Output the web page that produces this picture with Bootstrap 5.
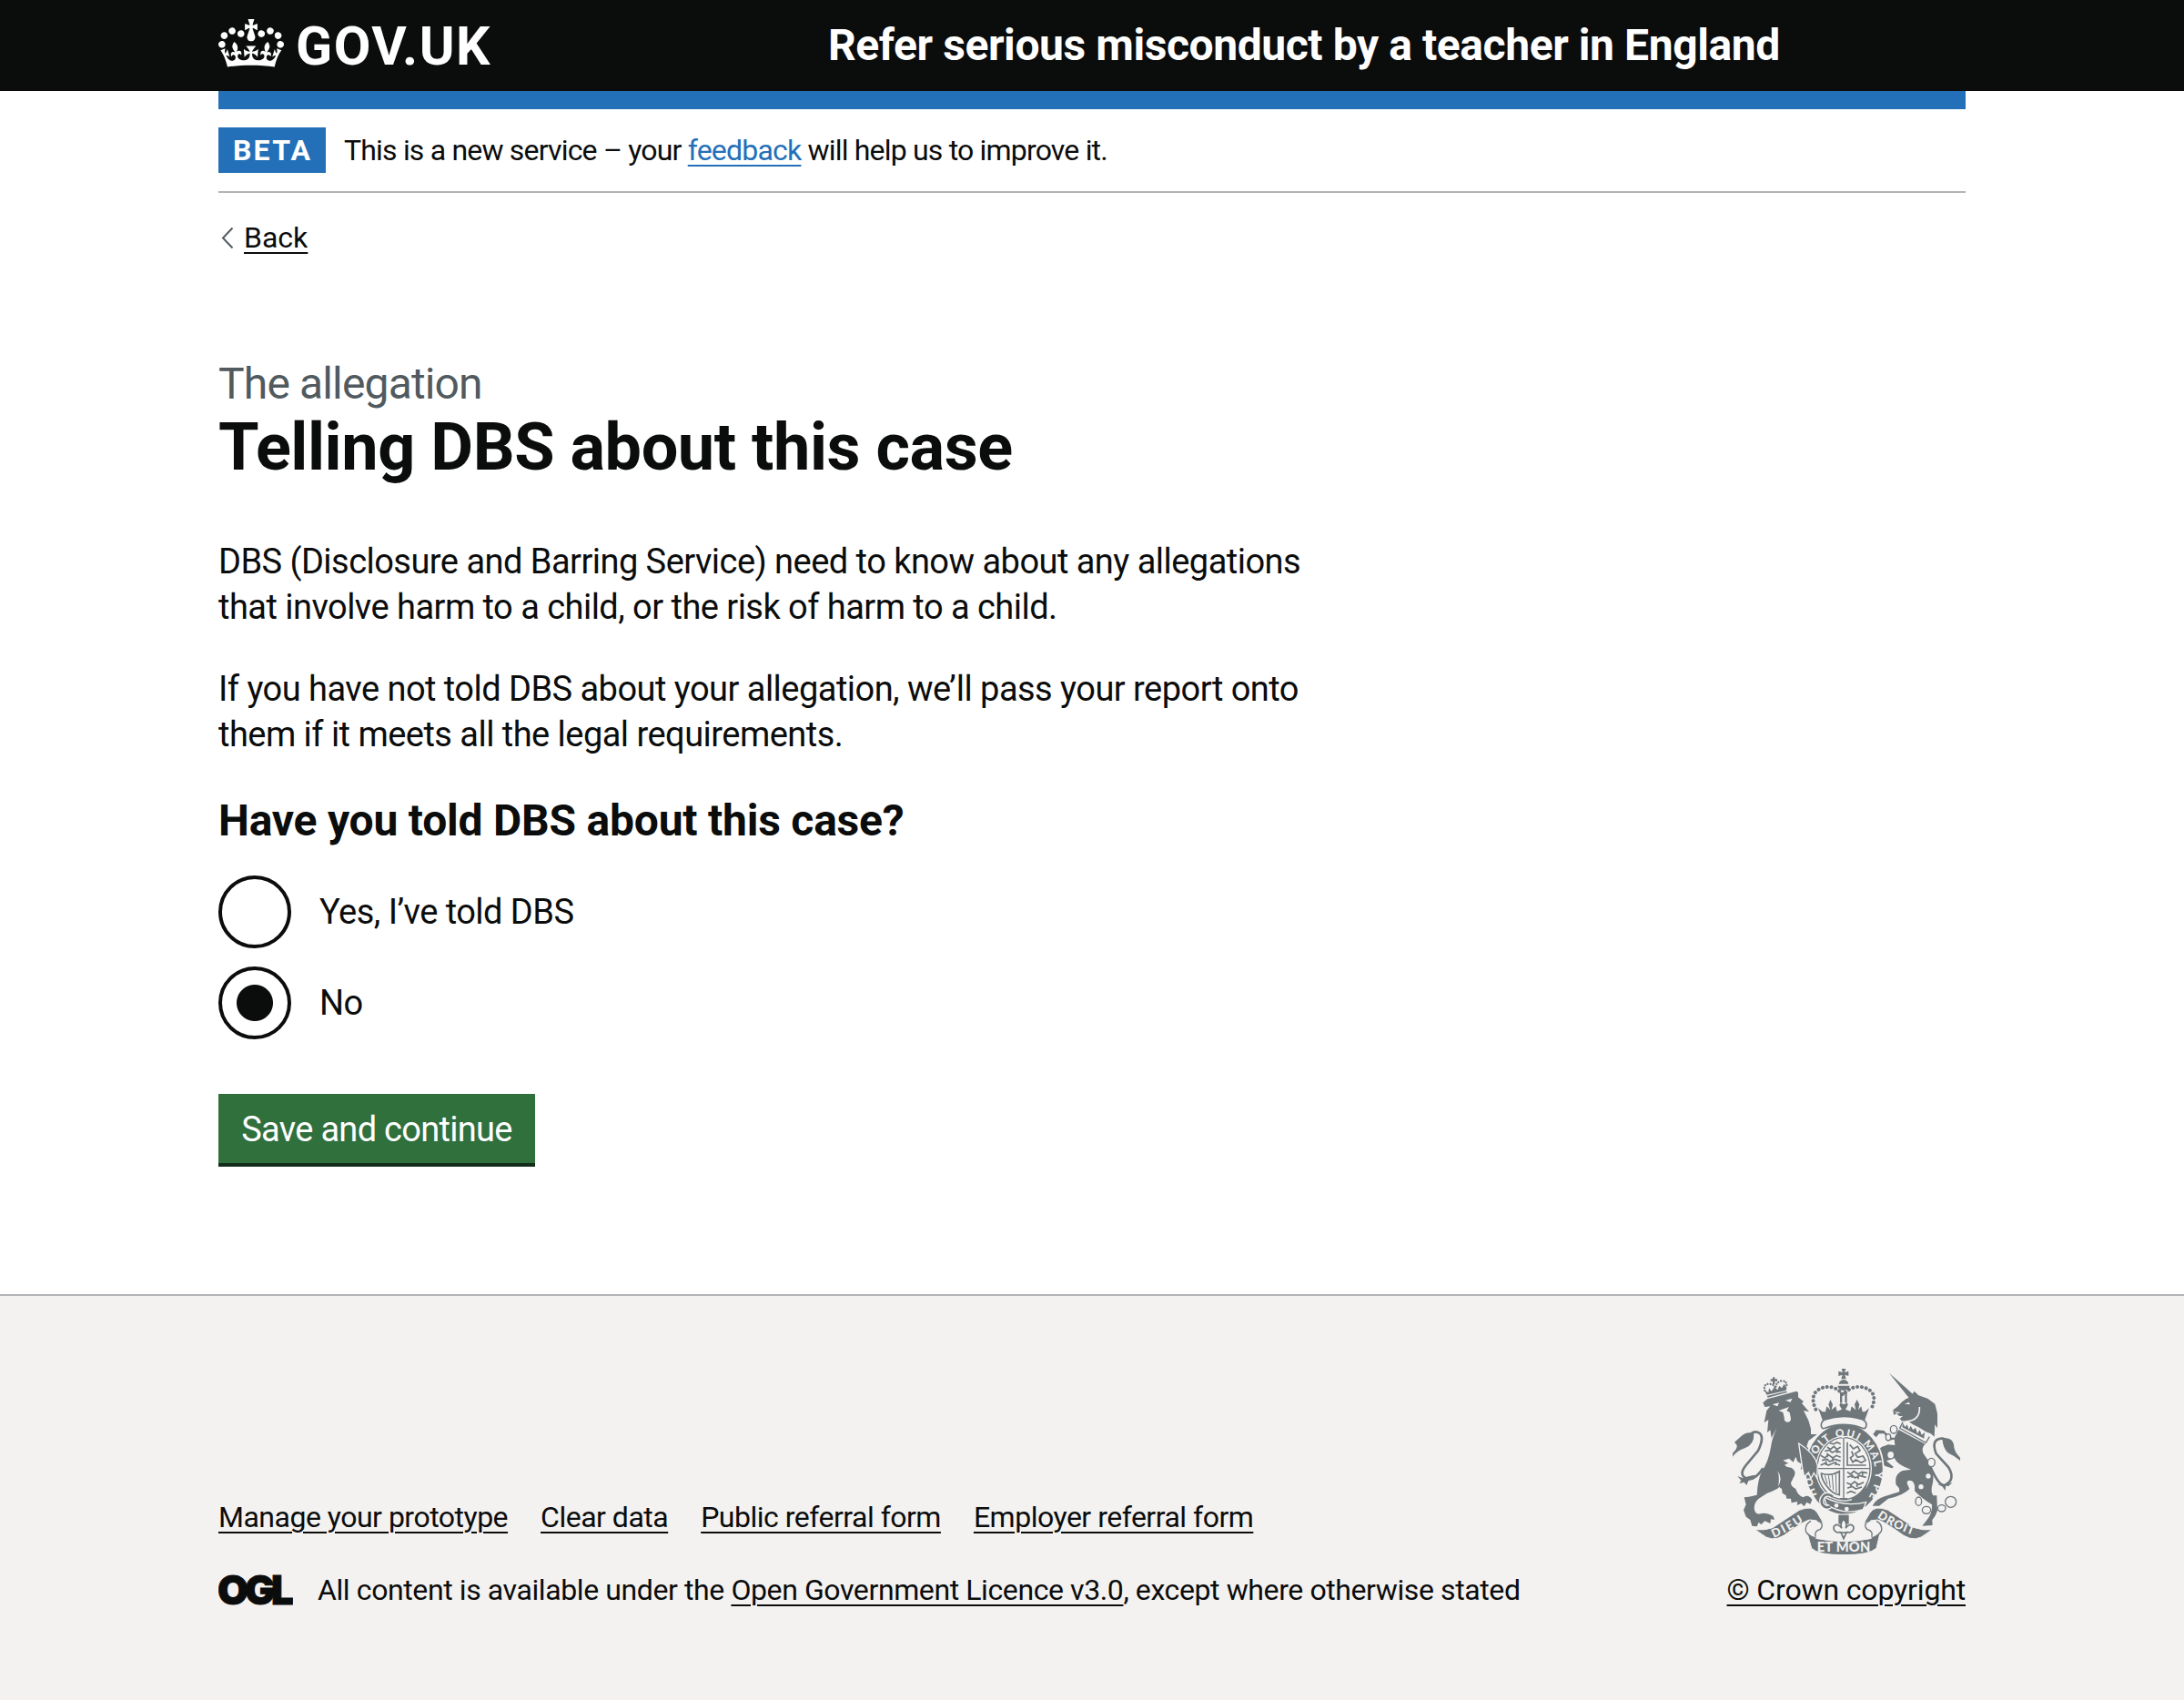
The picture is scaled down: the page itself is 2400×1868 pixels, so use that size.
<!DOCTYPE html>
<html lang="en">
<head>
<meta charset="utf-8">
<meta name="viewport" content="width=device-width, initial-scale=1">
<title>Telling DBS about this case – Refer serious misconduct by a teacher in England</title>
<link rel="stylesheet" href="https://cdn.jsdelivr.net/npm/bootstrap@5.3.0/dist/css/bootstrap.min.css">
<style>
  :root { --ink:#0b0c0c; --brand:#2370b8; --line:#b1b4b6; --muted:#505a5f; --footer:#f3f2f1; --go:#2f703d; --go-dark:#122d1a; --arms:#6f777b; }
  body { font-family: Roboto, "Liberation Sans", sans-serif; color: var(--ink); font-size: 38px; line-height: 50px; letter-spacing: -.53px; }
  .page-width { width: 1920px; }
  .site-header { background: var(--ink); height: 100px; }
  .site-logo { width: 670px; gap: 13px; color: #fff; font-size: 59px; letter-spacing: 1.5px; line-height: 1; }
  .site-logo svg { margin-top: -5px; }
  .service-name { color: #fff; font-size: 48px; line-height: 60px; letter-spacing: -.42px; }
  .brand-bar { height: 20px; background: var(--brand); }
  .phase { padding: 20px 0; border-bottom: 2px solid var(--line); gap: 20px; font-size: 32px; line-height: 50px; letter-spacing: -.81px; }
  .phase-tag { background: var(--brand); padding: 0 14px 0 16px; height: 50px; width: 118px; letter-spacing: 2.2px; border-radius: 0; font-size: 32px; line-height: 50px; }
  .ul-link { color: var(--ink); text-decoration: underline; text-decoration-thickness: 2px; text-underline-offset: 5px; }
  .ul-link.brand { color: var(--brand); }
  .back-row { margin-top: 29px; font-size: 32px; line-height: 40px; letter-spacing: 0; padding-left: 3px; gap: 11px; }
  .content { padding-top: 111px; height: 1141px; }
  .caption-text { font-size: 48px; line-height: 60px; color: var(--muted); letter-spacing: -.85px; margin-bottom: 2px; }
  h1 { font-size: 72px; line-height: 75px; letter-spacing: -.44px; margin-bottom: 63px; }
  .copy { width: 1280px; margin-bottom: 40px; }
  h2 { font-size: 48px; line-height: 60px; letter-spacing: -.22px; margin-bottom: 30px; }
  .choice { height: 80px; margin-bottom: 20px; gap: 31px; padding: 0; min-height: 0; }
  .choice .form-check-input { width: 80px; height: 80px; margin: 0; border: 4px solid var(--ink); background-color: transparent; float: none; flex: none; }
  .choice .form-check-input:checked { background-image: radial-gradient(circle, var(--ink) 19.5px, transparent 20.5px); background-size: 100% 100%; background-color: transparent; border-color: var(--ink); }
  .go-btn { margin-top: 40px; width: 348px; height: 76px; padding: 2px 0 0; border: 0; border-radius: 0; background: var(--go); color: #fff; font-size: 38px; line-height: 50px; letter-spacing: -.7px; box-shadow: 0 4px 0 var(--go-dark); }
  .site-footer { background: var(--footer); border-top: 2px solid var(--line); height: 446px; padding-top: 80px; font-size: 32px; line-height: 40px; letter-spacing: -.45px; }
  .foot-main { height: 263px; }
  .foot-nav { gap: 36px; margin-bottom: 40px; }
  .foot-nav, .crown-copy { letter-spacing: -.5px; }
  .licence { gap: 27px; letter-spacing: -.4px; }
  .crown-copy { letter-spacing: -.15px; }
  .arms { margin: 0 6px 19px 0; }
</style>
<script src="https://cdn.jsdelivr.net/npm/bootstrap@5.3.0/dist/js/bootstrap.bundle.min.js"></script>
</head>
<body class="bg-white">
<header class="site-header">
  <div class="page-width mx-auto h-100 d-flex align-items-center">
    <a class="site-logo d-flex align-items-center text-decoration-none fw-bold" href="#">
      <svg width="72" height="53" viewBox="0 0 132 97" fill="currentColor" aria-hidden="true"><path fill-rule="evenodd" d="M25 30.2c3.5 1.5 7.7-.2 9.1-3.7 1.5-3.6-.2-7.8-3.9-9.2-3.6-1.4-7.6.3-9.1 3.9-1.4 3.5.3 7.5 3.9 9zM9 39.5c3.6 1.5 7.8-.2 9.2-3.7 1.5-3.6-.2-7.8-3.9-9.1-3.6-1.5-7.6.2-9.1 3.8-1.4 3.5.3 7.5 3.8 9zM4.4 57.2c3.5 1.5 7.7-.2 9.1-3.8 1.5-3.6-.2-7.7-3.9-9.1-3.5-1.5-7.6.3-9.1 3.8-1.4 3.5.3 7.6 3.9 9.1zm38.3-21.4c3.5 1.5 7.7-.2 9.1-3.8 1.5-3.6-.2-7.7-3.9-9.1-3.6-1.5-7.6.3-9.1 3.8-1.3 3.6.4 7.7 3.9 9.1zm64.4-5.6c-3.6 1.5-7.8-.2-9.1-3.7-1.5-3.6.2-7.8 3.8-9.2 3.6-1.4 7.7.3 9.2 3.9 1.3 3.5-.4 7.5-3.9 9zm15.9 9.3c-3.6 1.5-7.7-.2-9.1-3.7-1.5-3.6.2-7.8 3.7-9.1 3.6-1.5 7.7.2 9.2 3.8 1.5 3.5-.3 7.5-3.8 9zm4.7 17.7c-3.6 1.5-7.8-.2-9.2-3.8-1.5-3.6.2-7.7 3.9-9.1 3.6-1.5 7.7.3 9.2 3.8 1.3 3.5-.4 7.6-3.9 9.1zM89.3 35.8c-3.6 1.5-7.8-.2-9.2-3.8-1.4-3.6.2-7.7 3.9-9.1 3.6-1.5 7.7.3 9.2 3.8 1.4 3.6-.3 7.7-3.9 9.1zM69.7 17.7l8.9 4.7V9.3l-8.9 2.8c-.2-.3-.5-.6-.9-.9L72.4 0H59.6l3.5 11.2c-.3.3-.6.5-.9.9l-8.8-2.8v13.1l8.8-4.7c.3.3.6.7.9.9l-5 15.4v.1c-.2.8-.4 1.6-.4 2.4 0 4.1 3.1 7.5 7 8.1h.2c.3 0 .7.1 1 .1.4 0 .7 0 1-.1h.2c4-.6 7.1-4.1 7.1-8.1 0-.8-.1-1.7-.4-2.4V34l-5.1-15.4c.4-.2.7-.6 1-.9zM66 92.8c16.9 0 32.8 1.1 47.1 3.2 4-16.9 8.9-26.7 14-33.5l-9.6-3.4c1 4.9 1.1 7.2 0 10.2-1.5-1.4-3-4.3-4.2-8.7L108.6 76c2.8-2 5-3.2 7.5-3.3-4.4 9.4-10 11.9-13.6 11.2-4.3-.8-6.3-4.6-5.6-7.9 1-4.7 5.7-5.9 8-.5 4.3-8.7-3-11.4-7.6-8.8 7.1-7.2 7.9-13.5 2.1-21.1-8 6.1-8.1 12.3-4.5 20.8-4.7-5.4-12.1-2.5-9.5 6.2 3.4-5.2 7.9-2 7.2 3.1-.6 4.3-6.4 7.8-13.5 7.2-10.3-.9-10.9-8-11.2-13.8 2.5-.5 7.1 1.8 11 7.3L80.2 60c-4.1 4.4-8 5.3-12.3 5.4 1.4-4.4 8-11.6 8-11.6H55.5s6.4 7.2 7.9 11.6c-4.2-.1-8-1-12.3-5.4l1.4 16.4c3.9-5.5 8.5-7.7 10.9-7.3-.3 5.8-.9 12.8-11.1 13.8-7.2.6-12.9-2.9-13.5-7.2-.7-5 3.8-8.3 7.1-3.1 2.7-8.7-4.6-11.6-9.4-6.2 3.7-8.5 3.6-14.7-4.6-20.8-5.8 7.6-5 13.9 2.2 21.1-4.7-2.6-11.9.1-7.7 8.8 2.3-5.5 7.1-4.2 8.1.5.7 3.3-1.3 7.1-5.7 7.9-3.5.7-9-1.8-13.5-11.2 2.5.1 4.7 1.3 7.5 3.3l-4.7-15.4c-1.2 4.4-2.7 7.2-4.3 8.7-1.1-3-.9-5.3 0-10.2l-9.5 3.4c5 6.9 9.9 16.7 14 33.5 14.8-2.1 30.8-3.2 47.7-3.2z"/></svg>
      <span>GOV.UK</span>
    </a>
    <div class="service-name fw-bold">Refer serious misconduct by a teacher in England</div>
  </div>
</header>

<div class="page-width mx-auto">
  <div class="brand-bar"></div>
  <div class="phase d-flex align-items-center">
    <strong class="phase-tag text-white">BETA</strong>
    <span>This is a new service – your <a class="ul-link brand" href="#">feedback</a> will help us to improve it.</span>
  </div>
  <div class="back-row d-flex align-items-center">
    <svg width="14" height="24" viewBox="0 0 14 24" fill="none" stroke="#505a5f" stroke-width="2" aria-hidden="true"><path d="M12.5 1.5 2 12.500 12.500 23.500"/></svg>
    <a class="ul-link" href="#">Back</a>
  </div>

  <main class="content">
    <div class="caption-text">The allegation</div>
    <h1 class="fw-bold mt-0">Telling DBS about this case</h1>
    <p class="copy">DBS (Disclosure and Barring Service) need to know about any allegations<br>that involve harm to a child, or the risk of harm to a child.</p>
    <p class="copy">If you have not told DBS about your allegation, we’ll pass your report onto<br>them if it meets all the legal requirements.</p>
    <form>
      <h2 class="fw-bold mt-0">Have you told DBS about this case?</h2>
      <div class="form-check choice d-flex align-items-center">
        <input class="form-check-input" type="radio" name="told" id="told-yes">
        <label class="form-check-label" for="told-yes">Yes, I’ve told DBS</label>
      </div>
      <div class="form-check choice d-flex align-items-center">
        <input class="form-check-input" type="radio" name="told" id="told-no" checked>
        <label class="form-check-label" for="told-no">No</label>
      </div>
      <button class="btn go-btn" type="button">Save and continue</button>
    </form>
  </main>
</div>

<footer class="site-footer">
  <div class="page-width mx-auto foot-main d-flex justify-content-between align-items-end">
    <div>
      <nav class="foot-nav d-flex">
        <a class="ul-link" href="#">Manage your prototype</a>
        <a class="ul-link" href="#">Clear data</a>
        <a class="ul-link" href="#">Public referral form</a>
        <a class="ul-link" href="#">Employer referral form</a>
      </nav>
      <div class="licence d-flex align-items-center">
        <svg width="82" height="34" viewBox="0 0 82 34" role="img" aria-label="OGL"><text x="-1" y="33" font-family="Inter, sans-serif" font-weight="900" font-size="44" fill="#0b0c0c" letter-spacing="0" textLength="84" stroke="#0b0c0c" stroke-width="1">OGL</text></svg>
        <span>All content is available under the <a class="ul-link" href="#">Open Government Licence v3.0</a>, except where otherwise stated</span>
      </div>
    </div>
    <div class="d-flex flex-column align-items-end">
      <svg class="arms" width="250" height="204" viewBox="72 72 750 612" fill="#6f777b" aria-hidden="true">
        <defs>
          <path id="garter" d="M351 488A104 124 0 1 1 525 488"/>
          <path id="scrollL" d="M208 630Q262 606 330 560"/>
          <path id="scrollR" d="M548 562Q610 604 690 628"/>
        </defs>
        <!-- lion -->
        <g transform="translate(60 60)">
          <path d="M112 124 126 112 178 98 222 86 228 90 228 106 246 120 240 126 264 154 246 150 262 182 270 210 270 228 290 228 262 250 256 268 284 300 292 350 284 376 272 352 266 370 258 346 244 352 246 340 236 344 240 326 226 318 220 302 212 320 198 308 178 314 196 324 184 328Q186 338 205 338 222 348 216 364L204 388Q204 400 220 408 226 428 244 436 262 424 274 444L268 458 256 452 248 466 238 456 224 462 226 450 206 454 204 440 190 440 188 430 176 422 174 408 166 402Q156 412 126 422L98 440Q80 456 84 478 88 494 104 490 120 484 146 498L150 510 138 508 136 522 118 514 106 526 98 518 92 532 76 530 70 510 56 500 48 478 56 460 50 436 66 434 92 428Q94 380 108 350 130 320 138 270 142 240 158 206L140 240 136 214 126 222 130 180 116 190 124 150 136 136 118 138Z"/>
          <path d="M160 348Q178 372 162 402 168 370 160 348ZM143 130 165 124 160 136ZM186 116 208 110 203 122ZM164 150 198 138 190 150 200 156 204 176Q204 188 192 188 180 186 182 172L178 156Z" fill="#f3f2f1"/>
          <path d="M232 262 272 300 284 330" fill="none" stroke="#f3f2f1" stroke-width="4"/>
          <path d="M118 84Q112 62 132 62 148 62 154 76 154 56 172 52 192 50 190 72" fill="none" stroke="#6f777b" stroke-width="7" stroke-linecap="round" stroke-dasharray="0.100 9"/>
          <path d="M124 98 118 84 130 90 132 76 140 86 150 72 160 82 166 68 174 76 182 62 190 74 188 84ZM125 102 190 86 192 90 128 107ZM144 40h7v6h8v7h-8v10h-7v-10h-7v-7h7z"/>
          <path d="M112 340Q84 384 58 374 30 362 56 330L96 282Q120 232 96 222 78 214 66 236" fill="none" stroke="#6f777b" stroke-width="8"/>
          <path d="M82 226Q60 216 40 235L18 254 26 264Q28 276 12 290V302Q24 284 52 274 84 262 82 226ZM28 366 44 372 76 364 90 362 64 382 58 396 50 386 34 390 40 380Z"/>
        </g>
        <!-- unicorn -->
        <g transform="translate(525 60)">
          <path d="M63 26 144 98 128 108ZM118 112 132 106 146 86 160 100 190 110 214 128 222 160V208L214 196 212 236 200 226 184 220 160 205 140 195 128 186 104 184 98 176 108 168 96 168 88 160 78 164 76 148 92 136 104 122Z"/>
          <path d="M116 186Q166 184 163 138" fill="none" stroke="#f3f2f1" stroke-width="5"/>
          <path d="M114 128 128 122 132 130ZM80 154 102 156 90 160Z" fill="#f3f2f1"/>
          <path d="M108 188 98 208 184 256 196 236" fill="none" stroke="#6f777b" stroke-width="4"/>
          <path d="M106 205 108 192 116 204 122 196 128 212 134 200 142 214 150 206 156 226 164 214 170 230 180 222 178 242Z"/>
          <path d="M94 213 182 260Q164 275 180 298 205 330 206 350 212 370 204 400 200 420 208 430L220 430 222 480Q215 500 205 510L206 528 172 530 186 512Q206 490 204 460 170 440 147 415 150 390 138 382 122 376 122 390L130 408Q110 430 60 440L30 464H8Q20 440 50 432L96 418Q100 405 86 395 78 360 108 348L135 344Q90 330 80 306L54 316 78 336 72 340 48 332 22 300 20 288 38 270 60 262 82 264 80 245 62 248 46 226 30 226 20 238 10 228 20 214 46 216 66 238 80 240Z"/>
          <path d="M200 338Q228 400 246 396 284 378 258 336L218 292Q200 246 234 242 246 240 256 254" fill="none" stroke="#6f777b" stroke-width="8"/>
          <path d="M238 240Q272 238 276 262 276 286 298 306V316Q282 300 258 290 240 276 238 240ZM222 392 250 394 272 386 258 400 250 396 248 414 238 400Z"/>
          <g fill="#f3f2f1" stroke="#6f777b" stroke-width="4"><ellipse cx="78" cy="212" rx="11" ry="13"/><ellipse cx="60" cy="238" rx="8" ry="11"/><ellipse cx="68" cy="296" rx="12" ry="13"/><ellipse cx="202" cy="321" rx="12" ry="14"/><circle cx="192" cy="366" r="10"/><circle cx="168" cy="401" r="10"/><ellipse cx="160" cy="449" rx="10" ry="14"/><ellipse cx="186" cy="478" rx="14" ry="12"/><ellipse cx="236" cy="472" rx="13" ry="11"/><circle cx="266" cy="451" r="18"/></g>
        </g>
        <!-- garter and shield -->
        <ellipse cx="440" cy="403" rx="129" ry="150" stroke="#f3f2f1" stroke-width="5"/>
        <ellipse cx="438" cy="401" rx="93" ry="108" fill="#f3f2f1"/>
        <ellipse cx="438" cy="401" rx="87" ry="102" fill="none" stroke="#6f777b" stroke-width="4"/>
        <path d="M438 299V503M351 401H525" stroke="#6f777b" stroke-width="4"/>
        <g fill="none" stroke="#6f777b" stroke-width="5">
          <path d="M384 330l10 8 12-10 10 10 12-8M376 344l14-4 10 8 14-6 14 6M362 358l14 8 12-10 14 10 12-8 14 6M366 374l18-4 8 8 16-8 20 6M362 390l14-6 12 6 18-8 20 8M392 318l14 2 10-6 12 6M384 350v14M402 364v14M416 336v14M380 376v14M412 378v12"/>
          <path d="M450 412l10 8 12-10 14 10 12-8 18 4M450 430l16-6 10 8 14-8 22 6M448 448l14 6 12-10 14 10 16-8M450 466l16-6 12 8 20-6M448 482l14-6 16 6M466 420v12M486 424v12M500 414v12M462 452v12M482 450v12"/>
          <path d="M450 314V390H512M458 322l12 14 14-8 8 14-16 10 8 12 18-4 8 14-14 8-18-10-10 8-8-14 10-8-6-14"/>
          <path d="M362 416Q394 428 424 410V488Q400 484 382 458 366 438 364 418"/>
          <path d="M376 424 384 452M388 424 394 464M400 422 404 472M412 420 414 480" stroke-width="3"/>
        </g>
        <path d="M424 498 452 498 446 505H430ZM462 500Q500 484 518 446L504 492 480 518Z"/>
        <g fill="#f3f2f1" font-family="Lato, sans-serif" font-weight="900">
          <text font-size="35" letter-spacing="0"><textPath href="#garter" textLength="590" startOffset="0">HON SOIT QUI MAL Y PENSE</textPath></text>
        </g>
        <path d="M372 494Q438 530 512 512L502 536Q438 556 382 520Z" stroke="#f3f2f1" stroke-width="4"/>
        <path d="M402 494Q388 482 374 490 360 504 368 520 378 534 394 526" fill="none" stroke="#f3f2f1" stroke-width="16"/><path d="M402 494Q388 482 374 490 360 504 368 520 378 534 394 526" fill="none" stroke="#6f777b" stroke-width="8"/>
        <circle cx="414" cy="523" r="7" fill="#f3f2f1"/><circle cx="448" cy="534" r="7" fill="#f3f2f1"/>
        <!-- lion's paw over the garter -->
        <path d="M290 318Q342 350 352 390L350 432 340 416 330 434 322 414 308 428 302 400Z" stroke="#f3f2f1" stroke-width="4"/>
        <!-- crown -->
        <path d="M346 206Q328 168 348 146 372 126 404 134 424 142 436 158 448 142 470 134 504 126 528 146 548 168 528 206" fill="none" stroke="#6f777b" stroke-width="12" stroke-linecap="round" stroke-dasharray="0.100 14.500"/>
        <path d="M418 128H458Q456 142 438 144 420 142 418 128ZM422 122Q424 110 438 108 452 110 454 122ZM431 72H445L441 84 454 80V96L442 92 446 106H430L434 92 421 96V80L435 84ZM426 150H433V184H426ZM442 150H449V184H442Z"/>
        <path d="M354 202 368 214 378 214 382 196 394 208 388 190 394 174 402 190 398 208 412 196 416 212 432 206 424 192 428 184 438 190 450 184 452 192 444 206 460 212 464 196 478 208 474 190 482 174 490 190 486 208 496 196 500 214 508 214 522 202 506 246Q438 224 370 246Z"/>
        <path d="M376 240Q438 218 502 240 516 248 512 262 508 272 500 268 438 244 376 268 364 272 364 258 364 246 376 240Z" fill="#f3f2f1" stroke="#6f777b" stroke-width="5"/>
        <!-- fleur-de-lis -->
        <path d="M421 554H455V584H421Z"/>
        <path d="M438 566Q424 584 432 598 416 578 406 592 402 606 418 612 428 608 430 614L438 632 446 614Q448 608 458 612 474 606 470 592 460 578 444 598 452 584 438 566Z" fill="#f3f2f1" stroke="#6f777b" stroke-width="5"/>
        <path d="M424 612H452" stroke="#6f777b" stroke-width="5"/>
        <!-- motto scroll -->
        <g id="ribbon" stroke="#f3f2f1" stroke-width="3">
          <path d="M146 602Q176 606 204 596L292 538Q336 520 352 548L372 582Q352 570 326 570 306 574 240 622 200 646 166 616Z"/>
          <path d="M730 602Q700 606 672 596L584 538Q540 520 524 548L504 582Q524 570 550 570 570 574 636 622 676 646 710 616Z"/>
          <path d="M316 606Q326 624 350 632 438 650 526 632 550 624 560 604L546 664Q520 686 438 686 354 686 332 664Z"/>
        </g>
        <path d="M350 572Q378 584 360 602 340 606 346 626M330 574Q308 586 314 610 322 624 346 630M526 572Q498 584 516 602 536 606 530 626M546 574Q568 586 562 608 554 622 530 630" fill="none" stroke="#6f777b" stroke-width="4"/>
        <g fill="#f3f2f1" font-family="Lato, sans-serif" font-weight="900" font-size="39" letter-spacing="0">
          <text><textPath href="#scrollL" textLength="112">DIEU</textPath></text>
          <text><textPath href="#scrollR" textLength="132">DROIT</textPath></text>
          <text x="350" y="674" font-size="44" textLength="176">ET MON</text>
        </g>
      </svg>
      <a class="ul-link crown-copy" href="#">© Crown copyright</a>
    </div>
  </div>
</footer>
</body>
</html>
